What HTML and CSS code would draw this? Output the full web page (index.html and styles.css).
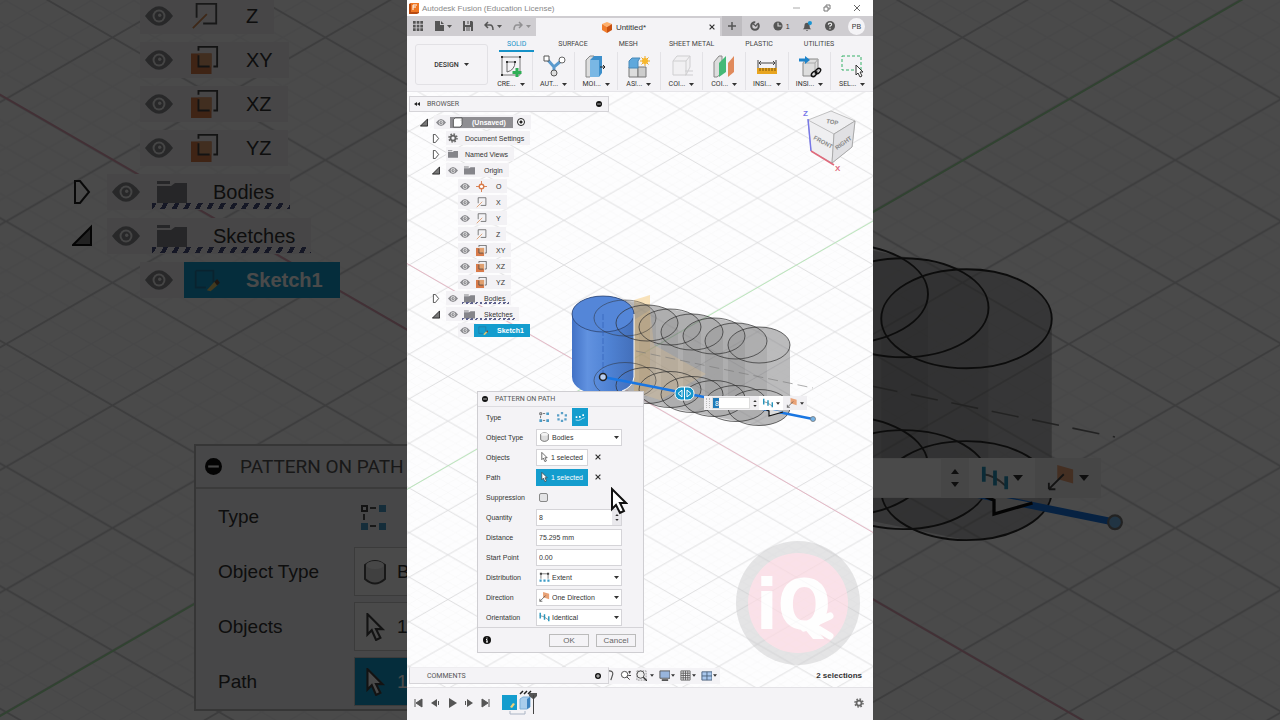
FILE: index.html
```html
<!DOCTYPE html>
<html lang="en">
<head>
    <meta charset="UTF-8">
    <meta name="viewport" content="width=device-width, initial-scale=1.0">
    <title>Autodesk Fusion (Education License)</title>
    <link rel="stylesheet" href="styles.css">
</head>
<body>
    <!-- Shared icons -->
    <svg class="sprite" aria-hidden="true">
        <symbol id="i-eye" viewBox="0 0 20 14"><path d="M0 7Q5 0 10 0T20 7Q15 14 10 14T0 7Z" fill="#8a8a8e"/><circle cx="10" cy="7" r="4.6" fill="#eee"/><circle cx="10" cy="7" r="3.2" fill="#8a8a8e"/><circle cx="10.5" cy="6.500" r="1.200" fill="#eee"/></symbol>
        <symbol id="i-closed" viewBox="0 0 18 24"><path d="M2 1h5l9 11-9 11H2Z" fill="#fff" stroke="#222" stroke-width="2"/></symbol>
        <symbol id="i-open" viewBox="0 0 20 20"><path d="M19 1v18H1Z" fill="#777" stroke="#111" stroke-width="2"/></symbol>
        <symbol id="i-folder" viewBox="0 0 30 22"><path d="M0 0h13v3H0ZM0 5h14l4-3h12v20H0Z" fill="#85858a"/></symbol>
        <symbol id="i-gear" viewBox="0 0 20 20"><circle cx="10" cy="10" r="5" fill="none" stroke="#666" stroke-width="3.500"/><circle cx="10" cy="10" r="8" fill="none" stroke="#666" stroke-width="3" stroke-dasharray="3.140 3.140"/></symbol>
        <symbol id="i-origin" viewBox="0 0 24 24"><path d="M12 0v24M0 12h24" stroke="#d87b4a" stroke-width="2"/><circle cx="12" cy="12" r="5" fill="#fff" stroke="#d87b4a" stroke-width="3"/></symbol>
        <symbol id="i-axis" viewBox="0 0 30 30"><path d="M6 17V2h21v21H13" fill="none" stroke="#555" stroke-width="2"/><path d="M2 28 17 13" stroke="#d58a55" stroke-width="2"/></symbol>
        <symbol id="i-plane" viewBox="0 0 30 30"><path d="M0 8h22v22H0Z" fill="#d87b4a"/><path d="M8 8h14v14H8Z" fill="#e0a06f"/><path d="M8 5V1h20v21h-4M8 10v12h12" fill="none" stroke="#444" stroke-width="2"/></symbol>
        <symbol id="i-sketch" viewBox="0 0 30 30"><path d="M5 5h19v13M5 5v18h11" fill="none" stroke="#2279a3" stroke-width="2"/><path d="M17 26 25 17l4 3-8 7Z" fill="#e3c76b"/><path d="m25 17 3-3 3 4-3 3Z" fill="#704c3d"/></symbol>
        <symbol id="i-comp" viewBox="0 0 24 24"><path d="M3 6 7 2h15v15l-4 5H3Z" fill="#fff" stroke="#555" stroke-width="2"/><path d="M18 7h4" stroke="#999"/></symbol>
        <symbol id="i-body" viewBox="0 0 24 26"><path d="M2 6Q12-2 22 6V20Q12 29 2 20Z" fill="#ddd" stroke="#555" stroke-width="2"/><ellipse cx="12" cy="6" rx="9" ry="4" fill="#f4f4f4"/></symbol>
        <symbol id="i-minus" viewBox="0 0 16 16"><circle cx="8" cy="8" r="8" fill="#111"/><path d="M3 8h10" stroke="#eee" stroke-width="2"/></symbol>
        <symbol id="i-plus" viewBox="0 0 16 16"><circle cx="8" cy="8" r="8" fill="#111"/><path d="M3 8h10M8 3v10" stroke="#fff" stroke-width="2"/></symbol>
        <symbol id="i-down" viewBox="0 0 10 6"><path d="M0 0h10L5 6Z" fill="currentColor"/></symbol>
        <symbol id="i-up" viewBox="0 0 10 6"><path d="M0 6h10L5 0Z" fill="currentColor"/></symbol>
        <symbol id="i-rect" viewBox="0 0 26 26"><path d="M2 2h5v5H2Z" fill="none" stroke="#444" stroke-width="2"/><path d="M10 4h6M4 10v6M10 22h6" stroke="#555" stroke-width="2"/><path d="M19 1h7v7h-7ZM1 19h7v7H1ZM19 19h7v7h-7Z" fill="#4a9cc8"/></symbol>
        <symbol id="i-circ" viewBox="0 0 26 26"><path d="M10 0h6v6h-6ZM0 6h6v6H0ZM20 6h6v6h-6ZM1 16h6v6H1ZM19 16h6v6h-6ZM10 20h6v6h-6Z" fill="#5aa0c8"/></symbol>
        <symbol id="i-path" viewBox="0 0 30 26"><path d="M2 22Q12 25 17 21T29 15" fill="none" stroke="#fff" stroke-width="2"/><path d="M2 11h5v5H2ZM12 10h5v5h-5ZM22 5h5v5h-5Z" fill="#fff"/></symbol>
        <symbol id="i-pick" viewBox="0 0 18 26"><path d="M2 1v19l4-4 4 9 4-2-4-8h6Z" fill="#fff" stroke="#444" stroke-width="2"/></symbol>
        <symbol id="i-x" viewBox="0 0 10 10"><path d="m1 1 8 8M9 1 1 9" stroke="currentColor" stroke-width="2"/></symbol>
        <symbol id="i-extent" viewBox="0 0 30 28"><path d="M5 5v14M25 5v14M5 5h20" stroke="#555" stroke-width="2"/><path d="M2 2h6v6H2ZM22 2h6v6h-6Z" fill="#444"/><path d="M1 21h6v6H1ZM12 21h6v6h-6ZM23 21h6v6h-6Z" fill="#3d9bc6"/></symbol>
        <symbol id="i-dir" viewBox="0 0 30 28"><path d="m11 0 17 5v15l-17-5Z" fill="#e9a276"/><path d="M2 26 18 10M2 26v-7M2 26h7" fill="none" stroke="#444" stroke-width="2"/></symbol>
        <symbol id="i-orient" viewBox="0 0 30 28"><path d="M2 10q12 1 24 12" fill="none" stroke="#777" stroke-width="2"/><path d="M3 2v16M15 6v16M27 12v14" stroke="#2796bd" stroke-width="4"/></symbol>
    </svg>

    <div class="stage">
        <!-- Enlarged backdrop, left -->
        <div class="side side-left" aria-hidden="true">
            <svg class="scene" viewBox="407 229 148 262" preserveAspectRatio="xMinYMid slice"><use href="#scene"/></svg>
            <ul class="tree tree-large">
                <li class="lvl2"><span class="chip"><svg class="eye"><use href="#i-eye"/></svg><svg class="ico"><use href="#i-axis"/></svg>Z</span></li>
                <li class="lvl2"><span class="chip"><svg class="eye"><use href="#i-eye"/></svg><svg class="ico"><use href="#i-plane"/></svg>XY</span></li>
                <li class="lvl2"><span class="chip"><svg class="eye"><use href="#i-eye"/></svg><svg class="ico"><use href="#i-plane"/></svg>XZ</span></li>
                <li class="lvl2"><span class="chip"><svg class="eye"><use href="#i-eye"/></svg><svg class="ico"><use href="#i-plane"/></svg>YZ</span></li>
                <li class="lvl1"><svg class="tri"><use href="#i-closed"/></svg><span class="chip hatched"><svg class="eye"><use href="#i-eye"/></svg><svg class="ico"><use href="#i-folder"/></svg>Bodies</span></li>
                <li class="lvl1"><svg class="tri"><use href="#i-open"/></svg><span class="chip hatched"><svg class="eye"><use href="#i-eye"/></svg><svg class="ico"><use href="#i-folder"/></svg>Sketches</span></li>
                <li class="lvl2"><span class="chip"><svg class="eye"><use href="#i-eye"/></svg></span><span class="picked"><svg class="ico"><use href="#i-sketch"/></svg>Sketch1</span></li>
            </ul>
            <div class="big-dialog">
                <div class="big-head"><svg class="big-dot"><use href="#i-minus"/></svg>PATTERN ON PATH</div>
                <div class="big-row"><span>Type</span><svg class="big-type"><use href="#i-rect"/></svg></div>
                <div class="big-row"><span>Object Type</span><div class="big-field"><svg><use href="#i-body"/></svg>Bodies</div></div>
                <div class="big-row"><span>Objects</span><div class="big-field"><svg><use href="#i-pick"/></svg>1 selected</div></div>
                <div class="big-row"><span>Path</span><div class="big-field active"><svg><use href="#i-pick"/></svg>1 selected</div></div>
            </div>
        </div>

        <main class="app">
            <header class="titlebar">
                <svg class="logo" viewBox="0 0 10 11"><path d="M0 1 2 0h8v10l-2 1H0Z" fill="#b84a10"/><path d="M2 0h8v9H2Z" fill="#ee7623"/><path d="M4 7V2h4M4 4h3" fill="none" stroke="#fff" stroke-width="1"/></svg>
                <span class="app-name">Autodesk Fusion (Education License)</span>
                <button aria-label="Minimize"><svg viewBox="0 0 8 8"><path d="M0 4h7" stroke="#aaa"/></svg></button>
                <button aria-label="Restore"><svg viewBox="0 0 8 8"><path d="M1 3h4v4H1ZM3 3V1h4v4H5" fill="none" stroke="#777"/></svg></button>
                <button aria-label="Close"><svg viewBox="0 0 8 8"><path d="m1 1 6 6M7 1 1 7" stroke="#666"/></svg></button>
            </header>

            <div class="tabbar">
                <div class="quick">
                    <button aria-label="Data panel"><svg class="q" viewBox="0 0 10 10"><path d="M0 0h2.700v2.700H0ZM3.700 0h2.700v2.700H3.700ZM7.300 0H10v2.700H7.300ZM0 3.700h2.700v2.700H0ZM3.700 3.700h2.700v2.700H3.700ZM7.300 3.700H10v2.700H7.300ZM0 7.300h2.700V10H0ZM3.700 7.300h2.700V10H3.700ZM7.300 7.300H10V10H7.300Z" fill="#555"/></svg></button>
                    <button class="gap-l" aria-label="File"><svg class="q" viewBox="0 0 10 10"><path d="M1 0h5v4h4v6H1ZM7 0l3 3H7Z" fill="#555"/></svg><svg class="caret"><use href="#i-down"/></svg></button>
                    <button class="gap-l" aria-label="Save"><svg class="q" viewBox="0 0 10 10"><path d="M0 0h9l1 1v9H0Z" fill="#555"/><path d="M2 0h5v4H2ZM2 6h6v4H2Z" fill="#cfcdd1"/><path d="M3 7h4M3 9h4M5 0v3" stroke="#555"/></svg></button>
                    <button class="gap-l" aria-label="Undo"><svg class="q" viewBox="0 0 10 10"><path d="M1 4h5q3 0 3 5M4 1 1 4l3 3" fill="none" stroke="#555" stroke-width="1.500"/></svg><svg class="caret"><use href="#i-down"/></svg></button>
                    <button class="gap-l faded" aria-label="Redo"><svg class="q" viewBox="0 0 10 10"><path d="M9 4H4Q1 4 1 9M6 1l3 3-3 3" fill="none" stroke="#555" stroke-width="1.500"/></svg><svg class="caret"><use href="#i-down"/></svg></button>
                </div>
                <div class="doc-tab">
                    <svg class="cube" viewBox="0 0 10 11"><path d="m5 0 5 2-5 3-5-3Z" fill="#ffb06b"/><path d="m0 2 5 3v6L0 8Z" fill="#f07c2b"/><path d="m10 2-5 3v6l5-3Z" fill="#c9500f"/></svg>
                    <span>Untitled*</span>
                    <button class="doc-close" aria-label="Close document"><svg><use href="#i-x"/></svg></button>
                </div>
                <button class="new-tab" aria-label="New design"><svg viewBox="0 0 10 10"><path d="M5 1v8M1 5h8" stroke="#555" stroke-width="1.500"/></svg></button>
                <div class="account">
                    <button aria-label="Extensions"><svg class="q" viewBox="0 0 12 12"><circle cx="6" cy="6" r="4.500" fill="none" stroke="#555" stroke-width="2.500" stroke-dasharray="21 3"/><path d="M3 3 7 6 9 3" fill="none" stroke="#555" stroke-width="1.500"/></svg></button>
                    <button aria-label="Jobs, 1"><svg class="q" viewBox="0 0 12 12"><circle cx="6" cy="6" r="5.500" fill="#555"/><path d="M6 2v4h4" fill="none" stroke="#ddd" stroke-width="1.300"/></svg>1</button>
                    <button aria-label="Notifications"><svg class="q" viewBox="0 0 12 12"><path d="M1 10q2-1 2-5 0-3 3-3t3 3q0 4 2 5ZM5 11h2v1H5Z" fill="#555"/><circle cx="9.500" cy="2.500" r="2.500" fill="#1994d2"/></svg></button>
                    <button aria-label="Help"><svg class="q" viewBox="0 0 12 12"><circle cx="6" cy="6" r="6" fill="#555"/><path d="M4 4.500q0-2 2-2t2 1.700Q8 5.500 6 6v1.500" fill="none" stroke="#eee" stroke-width="1.300"/><circle cx="6" cy="9.300" r=".8" fill="#eee"/></svg></button>
                    <button class="avatar">PB</button>
                </div>
            </div>

            <section class="ribbon">
                <button class="workspace">DESIGN <svg class="caret"><use href="#i-down"/></svg></button>
                <div class="ribbon-main">
                    <nav class="ribbon-tabs">
                        <a href="#" class="current">SOLID</a>
                        <a href="#">SURFACE</a>
                        <a href="#">MESH</a>
                        <a href="#">SHEET METAL</a>
                        <a href="#">PLASTIC</a>
                        <a href="#">UTILITIES</a>
                    </nav>
                    <div class="tools">
                        <button><svg viewBox="0 0 24 24"><path d="M3 3h18v18H3Z" fill="none" stroke="#777"/><path d="M8 18V8h8q0 8-8 10Z" fill="none" stroke="#666"/><path d="M2 2h2v2H2ZM20 2h2v2h-2ZM2 20h2v2H2ZM7 7h2v2H7ZM15 7h2v2h-2Z" fill="#333"/><path d="M18 14v9M13.500 18.500h9" stroke="#2fae55" stroke-width="3"/></svg><span>CRE...<svg class="caret"><use href="#i-down"/></svg></span></button>
                        <button><svg viewBox="0 0 24 24"><path d="m5 5 7 8 7-6M12 12v6" fill="none" stroke="#5a9ace" stroke-width="3"/><path d="M2 2h5v5H2Z" fill="#fff" stroke="#555"/><circle cx="20" cy="6" r="3" fill="#fff" stroke="#666"/><circle cx="12" cy="19" r="3" fill="#ddd" stroke="#555"/></svg><span>AUT...<svg class="caret"><use href="#i-down"/></svg></span></button>
                        <button><svg viewBox="0 0 24 24"><path d="m2 6 4-4h4v16l-4 5H2Z" fill="#ddd" stroke="#888"/><path d="M6 6h9v17H6Z" fill="#79b7e4"/><path d="m6 6 4-4h8l-3 4ZM15 6l3-4v17l-3 4Z" fill="#3d8fcb"/><path d="M16 13h5M19 11l2 2-2 2" fill="none" stroke="#222"/></svg><span>MOI...<svg class="caret"><use href="#i-down"/></svg></span></button>
                        <button><svg viewBox="0 0 24 24"><path d="M2 13h9v10H2Z" fill="#ddd" stroke="#777"/><path d="M11 13h8v10h-8Z" fill="#ccc" stroke="#777"/><path d="m2 7 3-3h8l-2 3v7H2Z" fill="#5fa8dc" stroke="#4a89b8"/><path d="M18 2v10M13 7h10M14.500 3.500l7 7M21.500 3.500l-7 7" stroke="#eba51f"/><circle cx="18" cy="7" r="3" fill="#f8b72b"/></svg><span>AS!...<svg class="caret"><use href="#i-down"/></svg></span></button>
                        <button class="pale"><svg viewBox="0 0 24 24"><path d="m3 7 4-5h13v11l-4 8H3Z" fill="#eee" stroke="#999"/><path d="M3 7h13v14M16 7l4-5M15 17h8M15 21h8" fill="none" stroke="#999"/></svg><span>COI...<svg class="caret"><use href="#i-down"/></svg></span></button>
                        <button><svg viewBox="0 0 24 24"><path d="m2 8 5-6h3v17l-5 4H2Z" fill="#ddd" stroke="#888"/><path d="m7 9 7-7v16l-7 5Z" fill="#45b977"/><path d="m16 9 6-7v16l-6 5Z" fill="#e08a5c"/></svg><span>COI...<svg class="caret"><use href="#i-down"/></svg></span></button>
                        <button><svg viewBox="0 0 24 24"><path d="M3 6v8M21 6v8M4 9h16M6 7 4 9l2 2M18 7l2 2-2 2" fill="none" stroke="#444"/><path d="M2 14h20v6H2Z" fill="#e8a520"/><path d="M5 14v3M8 14v3M11 14v3M14 14v3M17 14v3M20 14v3" stroke="#7c5409"/></svg><span>INSI...<svg class="caret"><use href="#i-down"/></svg></span></button>
                        <button><svg viewBox="0 0 24 24"><path d="m5 9 3-4h12v12l-3 5H5Z" fill="#ddd" stroke="#888"/><path d="M5 9h12v13M17 9l3-4" fill="none" stroke="#aaa"/><path d="M1 6h7" stroke="#1c83ca" stroke-width="3"/><path d="m7 2 5 4-5 4Z" fill="#1c83ca"/><ellipse cx="16" cy="20" rx="3" ry="2" transform="rotate(-45 16 20)" fill="none" stroke="#111" stroke-width="1.500"/><ellipse cx="20" cy="17" rx="3" ry="2" transform="rotate(-45 20 17)" fill="none" stroke="#111" stroke-width="1.500"/></svg><span>INSI...<svg class="caret"><use href="#i-down"/></svg></span></button>
                        <button><svg viewBox="0 0 24 24"><path d="M2 2h19v14H2Z" fill="none" stroke="#37b169" stroke-dasharray="3 2"/><path d="M16 11v10l2-2 2 4 2-1-2-4h3Z" fill="#fff" stroke="#333"/></svg><span>SEL...<svg class="caret"><use href="#i-down"/></svg></span></button>
                    </div>
                </div>
            </section>

            <section class="canvas">
                <svg class="scene" viewBox="407 92 466 595" preserveAspectRatio="xMinYMin slice">
                    <defs>
                        <!-- One cell of the isometric floor: faint fifths, stronger full lines -->
                        <pattern id="floor" x="564" y="131.200" width="77.400" height="44.600" patternUnits="userSpaceOnUse">
                            <path d="M0 8.920 15.480 0M0 17.840 30.960 0M0 26.760 46.440 0M0 35.680 61.920 0M15.480 44.600 77.400 8.920M30.960 44.600 77.400 17.840M46.440 44.600 77.400 26.760M61.920 44.600 77.400 35.680M61.920 0 77.400 8.920M46.440 0 77.400 17.840M30.960 0 77.400 26.760M15.480 0 77.400 35.680M0 8.920 61.920 44.600M0 17.840 46.440 44.600M0 26.760 30.960 44.600M0 35.680 15.480 44.600" stroke="#f5f5f6" stroke-width=".5"/>
                            <path d="M0 0 77.400 44.600M0 44.600 77.400 0" stroke="#d0d0d2" stroke-width=".7"/>
                        </pattern>
                        <linearGradient id="steel"><stop offset="0" stop-color="#4272c6"/><stop offset=".25" stop-color="#6192e0"/><stop offset=".6" stop-color="#4f82d3"/><stop offset="1" stop-color="#436fba"/></linearGradient>
                        <path id="solid" d="M-31 0V62.500A31 18 0 0 0 31 62.500V0A31 18 0 0 0-31 0Z" fill="#5c5b5f" fill-opacity=".13"/>
                        <g id="rims" fill="none" stroke="#2c2c2c" stroke-width=".7"><ellipse rx="31" ry="18"/><ellipse cy="62.500" rx="31" ry="18"/></g>
                    </defs>
                    <g id="scene">
                        <path d="M400 80H880V700H400Z" fill="#fdfdfe"/>
                        <path d="M400 80H880V700H400Z" fill="url(#floor)"/>
                        <path d="M400 259.500 880 536.500" stroke="#e4a5b8" stroke-width=".7"/>
                        <path d="M400 493.500 603 376.500 880 217" fill="none" stroke="#a8e6a8" stroke-width=".7"/>
                        <path d="M634 300 650 295V388L634 400Z" fill="#f5c46a" fill-opacity=".45"/>
                        <path d="M625 300 759 327A31 18 0 0 1 790 345V407.500A31 18 0 0 1 759 425.500L625 398.500Z" fill="#6f6e72" fill-opacity=".36"/>
                        <use href="#solid" x="625" y="318"/>
                        <use href="#solid" x="647" y="323"/>
                        <use href="#solid" x="670" y="327"/>
                        <use href="#solid" x="692" y="332"/>
                        <use href="#solid" x="714" y="336"/>
                        <use href="#solid" x="736" y="341"/>
                        <use href="#solid" x="759" y="345"/>
                        <path d="M634 320 650 310 654 345 706 374 660 400 634 392Z" fill="#e8c48c" fill-opacity=".3"/>
                        <path d="M572 314V377A31 18 0 0 0 634 377V314A31 18 0 0 0 572 314Z" fill="url(#steel)"/>
                        <ellipse cx="603" cy="314" rx="31" ry="18" fill="#5486d8" stroke="#263a60" stroke-width=".7"/>
                        <path d="M603 314v63" stroke="#3564bd" stroke-width=".8" stroke-dasharray="6 2"/>
                        <path d="M634 314V377Q633 387 622 391" fill="none" stroke="#fff"/>
                        <use href="#rims" x="625" y="318" opacity=".7"/>
                        <use href="#rims" x="647" y="323"/>
                        <use href="#rims" x="670" y="327"/>
                        <use href="#rims" x="692" y="332"/>
                        <use href="#rims" x="714" y="336"/>
                        <use href="#rims" x="736" y="341"/>
                        <use href="#rims" x="759" y="345"/>
                        <path d="M636 351 813 388" stroke="#777" stroke-width=".6" stroke-dasharray="10 5"/>
                        <path d="M603 377Q650 386 704 397T813 419" fill="none" stroke="#1976e2" stroke-width="2.600"/>
                        <circle cx="603" cy="377" r="3.500" fill="#b7cdef" stroke="#222" stroke-width="1.500"/>
                        <circle cx="813" cy="419" r="2.500" fill="#74b3e8" stroke="#777" stroke-width=".8"/>
                        <path d="M762 408l7 3v5l14-4" fill="#ddd" stroke="#111" stroke-width="1.200"/>
                    </g>
                    <rect x="675" y="387" width="19" height="13" rx="6" fill="#1396cb" stroke="#fff"/>
                    <path d="M684.500 387v13" stroke="#fff"/>
                    <path d="m682 390-4 3.500 4 3.500ZM687 390l4 3.500-4 3.500Z" fill="#1396cb" stroke="#fff"/>
                    <!-- View cube -->
                    <path d="M831 111 855 121 852 147 832 163 811 151 808 120Z" fill="#efeff1" stroke="#aaa" stroke-width=".7"/>
                    <path d="M808 120 834 134 855 121M834 134 832 163" fill="none" stroke="#aaa" stroke-width=".7"/>
                    <path d="m834 134 21-13-3 26-20 16Z" fill="#e0e0e3" stroke="#999" stroke-width=".7"/>
                    <path d="M808 119 811 151" stroke="#7777e8" stroke-width="1.500"/>
                    <path d="m811 151 23 14" stroke="#e06a7c" stroke-width="1.500"/>
                    <g class="cube-text">
                        <text x="813" y="139" transform="rotate(28 813 139)">FRONT</text>
                        <text x="837" y="150" transform="rotate(-36 837 150)">RIGHT</text>
                        <text x="826" y="123" transform="rotate(10 826 123)">TOP</text>
                    </g>
                    <text class="axis-z" x="803" y="116">Z</text>
                    <text class="axis-x" x="835" y="171">X</text>
                </svg>

                <!-- Channel mark -->
                <svg class="watermark" viewBox="0 0 124 124">
                    <circle cx="62" cy="62" r="62" fill="#c9c9cb" fill-opacity=".6"/>
                    <circle cx="62" cy="62" r="50" fill="#ffdbe4" fill-opacity=".85"/>
                    <text x="20" y="88">iQ</text>
                    <path d="m68 87 26-12M74 83l20 12" stroke="#fff" stroke-width="7" stroke-linecap="round"/>
                </svg>

                <div class="panel-head">
                    <svg class="rewind" viewBox="0 0 12 8"><path d="M6 0v8L0 4ZM12 0v8L6 4Z" fill="#222"/></svg>
                    <span>BROWSER</span>
                    <button aria-label="Collapse browser"><svg><use href="#i-minus"/></svg></button>
                </div>
                <ul class="tree">
                    <li class="lvl0"><svg class="tri"><use href="#i-open"/></svg><span class="chip root"><svg class="eye"><use href="#i-eye"/></svg><b class="unsaved"><svg class="ico"><use href="#i-comp"/></svg>(Unsaved)</b><input type="radio" checked aria-label="Activate component"></span></li>
                    <li class="lvl1"><svg class="tri"><use href="#i-closed"/></svg><span class="chip no-eye"><svg class="ico"><use href="#i-gear"/></svg>Document Settings</span></li>
                    <li class="lvl1"><svg class="tri"><use href="#i-closed"/></svg><span class="chip no-eye"><svg class="ico"><use href="#i-folder"/></svg>Named Views</span></li>
                    <li class="lvl1"><svg class="tri"><use href="#i-open"/></svg><span class="chip"><svg class="eye"><use href="#i-eye"/></svg><svg class="ico"><use href="#i-folder"/></svg>Origin</span></li>
                    <li class="lvl2"><span class="chip"><svg class="eye"><use href="#i-eye"/></svg><svg class="ico"><use href="#i-origin"/></svg>O</span></li>
                    <li class="lvl2"><span class="chip"><svg class="eye"><use href="#i-eye"/></svg><svg class="ico"><use href="#i-axis"/></svg>X</span></li>
                    <li class="lvl2"><span class="chip"><svg class="eye"><use href="#i-eye"/></svg><svg class="ico"><use href="#i-axis"/></svg>Y</span></li>
                    <li class="lvl2"><span class="chip"><svg class="eye"><use href="#i-eye"/></svg><svg class="ico"><use href="#i-axis"/></svg>Z</span></li>
                    <li class="lvl2"><span class="chip"><svg class="eye"><use href="#i-eye"/></svg><svg class="ico"><use href="#i-plane"/></svg>XY</span></li>
                    <li class="lvl2"><span class="chip"><svg class="eye"><use href="#i-eye"/></svg><svg class="ico"><use href="#i-plane"/></svg>XZ</span></li>
                    <li class="lvl2"><span class="chip"><svg class="eye"><use href="#i-eye"/></svg><svg class="ico"><use href="#i-plane"/></svg>YZ</span></li>
                    <li class="lvl1"><svg class="tri"><use href="#i-closed"/></svg><span class="chip hatched"><svg class="eye"><use href="#i-eye"/></svg><svg class="ico"><use href="#i-folder"/></svg>Bodies</span></li>
                    <li class="lvl1"><svg class="tri"><use href="#i-open"/></svg><span class="chip hatched"><svg class="eye"><use href="#i-eye"/></svg><svg class="ico"><use href="#i-folder"/></svg>Sketches</span></li>
                    <li class="lvl2"><span class="chip"><svg class="eye"><use href="#i-eye"/></svg></span><span class="picked"><svg class="ico"><use href="#i-sketch"/></svg>Sketch1</span></li>
                </ul>

                <!-- Value box on the path -->
                <div class="mini">
                    <span class="grip"></span>
                    <input type="text" value="8" aria-label="Pattern quantity">
                    <span class="spin"><svg><use href="#i-up"/></svg><svg><use href="#i-down"/></svg></span>
                    <button class="orient" aria-label="Orientation"><svg><use href="#i-orient"/></svg><svg class="caret"><use href="#i-down"/></svg></button>
                    <button aria-label="Direction"><svg><use href="#i-dir"/></svg><svg class="caret"><use href="#i-down"/></svg></button>
                </div>

                <form class="dialog">
                    <h2><svg><use href="#i-minus"/></svg>PATTERN ON PATH</h2>
                    <div class="fields">
                        <div class="row">
                            <span>Type</span>
                            <div class="types">
                                <button type="button" aria-label="Rectangular"><svg><use href="#i-rect"/></svg></button>
                                <button type="button" aria-label="Circular"><svg><use href="#i-circ"/></svg></button>
                                <button type="button" class="active" aria-label="On path"><svg><use href="#i-path"/></svg></button>
                            </div>
                        </div>
                        <div class="row">
                            <label for="objectType">Object Type</label>
                            <div class="field"><svg><use href="#i-body"/></svg><select id="objectType"><option>Bodies</option></select><svg class="caret"><use href="#i-down"/></svg></div>
                        </div>
                        <div class="row">
                            <span>Objects</span>
                            <button type="button" class="selection"><svg><use href="#i-pick"/></svg>1 selected</button>
                            <button type="button" class="clear" aria-label="Clear objects"><svg><use href="#i-x"/></svg></button>
                        </div>
                        <div class="row">
                            <span>Path</span>
                            <button type="button" class="selection active"><svg><use href="#i-pick"/></svg>1 selected</button>
                            <button type="button" class="clear" aria-label="Clear path"><svg><use href="#i-x"/></svg></button>
                        </div>
                        <div class="row">
                            <label for="suppression">Suppression</label>
                            <input type="checkbox" id="suppression">
                        </div>
                        <div class="row">
                            <label for="quantity">Quantity</label>
                            <div class="field"><input type="text" id="quantity" value="8"><span class="spin"><svg><use href="#i-up"/></svg><svg><use href="#i-down"/></svg></span></div>
                        </div>
                        <div class="row">
                            <label for="distance">Distance</label>
                            <div class="field"><input type="text" id="distance" value="75.295 mm"></div>
                        </div>
                        <div class="row">
                            <label for="start">Start Point</label>
                            <div class="field"><input type="text" id="start" value="0.00"></div>
                        </div>
                        <div class="row">
                            <label for="distribution">Distribution</label>
                            <div class="field"><svg><use href="#i-extent"/></svg><select id="distribution"><option>Extent</option></select><svg class="caret"><use href="#i-down"/></svg></div>
                        </div>
                        <div class="row">
                            <label for="direction">Direction</label>
                            <div class="field"><svg><use href="#i-dir"/></svg><select id="direction"><option>One Direction</option></select><svg class="caret"><use href="#i-down"/></svg></div>
                        </div>
                        <div class="row">
                            <label for="orientation">Orientation</label>
                            <div class="field"><svg><use href="#i-orient"/></svg><select id="orientation"><option>Identical</option></select><svg class="caret"><use href="#i-down"/></svg></div>
                        </div>
                    </div>
                    <footer>
                        <svg class="info" viewBox="0 0 16 16"><circle cx="8" cy="8" r="8" fill="#111"/><path d="M8 3v2M6 7h2v5M6 12h4" fill="none" stroke="#fff" stroke-width="2"/></svg>
                        <button type="button">OK</button>
                        <button type="button">Cancel</button>
                    </footer>
                </form>

                <svg class="pointer" viewBox="0 0 18 28"><path d="M2 2v20l4-4 4 8 4-2-4-8h6Z" fill="#fff" stroke="#111" stroke-width="2"/></svg>

                <div class="status">
                    <div class="comments">
                        <span>COMMENTS</span>
                        <button aria-label="Add comment"><svg><use href="#i-plus"/></svg></button>
                    </div>
                    <div class="nav">
                        <button class="cut" aria-label="Pan"><svg viewBox="0 0 12 12"><path d="M0 1q5 0 4 4l-2 6" fill="none" stroke="#555" stroke-width="1.300"/></svg></button>
                        <button aria-label="Zoom"><svg viewBox="0 0 12 12"><circle cx="5" cy="5" r="3.500" fill="#fff" stroke="#444"/><path d="m7.500 7.500 3 3M9 2h3M10.500 1v3M9 6h3" stroke="#333"/></svg></button>
                        <button class="fit" aria-label="Fit"><svg viewBox="0 0 12 12"><path d="M1 1h10v10H1Z" fill="none" stroke="#777" stroke-width=".8" stroke-dasharray="2 1"/><circle cx="5" cy="5" r="4" fill="#eee" stroke="#444"/><path d="m8 8 4 4" stroke="#333" stroke-width="1.500"/></svg><svg class="caret"><use href="#i-down"/></svg></button>
                        <button aria-label="Display settings"><svg viewBox="0 0 12 12"><path d="M1 1h11v8H1Z" fill="#98b5dc" stroke="#555"/><path d="M3 11h7" stroke="#555" stroke-width="2"/></svg><svg class="caret"><use href="#i-down"/></svg></button>
                        <button aria-label="Grid settings"><svg viewBox="0 0 12 12"><path d="M1 1h10v10H1ZM3.500 1v10M6 1v10M8.500 1v10M1 3.500h10M1 6h10M1 8.500h10" fill="none" stroke="#555" stroke-width=".9"/></svg><svg class="caret"><use href="#i-down"/></svg></button>
                        <button aria-label="Viewports"><svg viewBox="0 0 12 12"><path d="M1 2h11v9H1ZM6.500 2v9M1 6.500h11" fill="#a9c7ec" stroke="#4c627e"/></svg><svg class="caret"><use href="#i-down"/></svg></button>
                    </div>
                    <strong>2 selections</strong>
                </div>
            </section>

            <footer class="timeline">
                <button aria-label="First"><svg viewBox="0 0 10 10"><path d="M2 1v8M9 1v8L3 5Z" fill="#555" stroke="#555"/></svg></button>
                <button aria-label="Step back"><svg viewBox="0 0 10 10"><path d="M7 1v8L1 5ZM8 3h1v4H8Z" fill="#555"/></svg></button>
                <button aria-label="Play"><svg viewBox="0 0 10 10"><path d="m2 0 8 5-8 5Z" fill="#555"/></svg></button>
                <button aria-label="Step forward"><svg viewBox="0 0 10 10"><path d="M3 1v8l6-4ZM1 3h1v4H1Z" fill="#555"/></svg></button>
                <button aria-label="Last"><svg viewBox="0 0 10 10"><path d="M8 1v8M1 1v8l6-4Z" fill="#555" stroke="#555"/></svg></button>
                <svg class="features" viewBox="0 0 38 28">
                    <path d="M0 6h15v15H0Z" fill="#149dce"/>
                    <path d="m8 18 3-4 2 1-3 4Z" fill="#f0d278"/>
                    <path d="m18 10 3-2h7v10l-3 2h-7Z" fill="#a9cdec" stroke="#7fb0d8"/>
                    <path d="M25 10v10l3-2V8Z" fill="#3c83c0"/>
                    <path d="m18 5 3-3M22 5l3-3M26 5l3-3" stroke="#222" stroke-width="1.500"/>
                    <path d="M27 4h8v3l-3 3-1 0-4-3Z" fill="#555"/>
                    <path d="M31.500 6v19" stroke="#444"/>
                    <path d="M8 22v3h15v-3" fill="none" stroke="#aab4c4"/>
                </svg>
                <button class="prefs" aria-label="Preferences"><svg><use href="#i-gear"/></svg></button>
            </footer>
        </main>

        <!-- Enlarged backdrop, right -->
        <div class="side side-right" aria-hidden="true">
            <svg class="scene" viewBox="725 229 148 262" preserveAspectRatio="xMinYMid slice"><use href="#scene"/></svg>
            <div class="big-mini">
                <span class="big-value"></span>
                <span class="spin"><svg><use href="#i-up"/></svg><svg><use href="#i-down"/></svg></span>
                <span class="big-tool white"><svg><use href="#i-orient"/></svg><svg class="caret"><use href="#i-down"/></svg></span>
                <span class="big-tool"><svg><use href="#i-dir"/></svg><svg class="caret"><use href="#i-down"/></svg></span>
            </div>
        </div>
    </div>
</body>
</html>
```
FILE: styles.css
```css
/* Base */
* {
    box-sizing: border-box;
}

body {
    margin: 0;
    font-family: "Liberation Sans", Arial, sans-serif;
    font-size: 7px;
    color: #333;
    background-color: #4a4a4b;
}

button, input, select {
    margin: 0;
    padding: 0;
    border: none;
    background: none;
    font: inherit;
    color: inherit;
}

button {
    display: flex;
    align-items: center;
    justify-content: center;
    cursor: pointer;
}

svg {
    display: block;
    flex: none;
}

.sprite {
    position: absolute;
    width: 0;
    height: 0;
}

.caret {
    width: 5px;
    height: 3px;
}

.stage {
    display: grid;
    grid-template-columns: 407fr 466fr 407fr;
    height: 100vh;
    overflow: hidden;
}

.scene {
    position: absolute;
    inset: 0;
    width: 100%;
    height: 100%;
}

/* Dark backdrops */
.side {
    position: relative;
    overflow: hidden;
    min-width: 0;
}

.side::after {
    content: "";
    position: absolute;
    inset: 0;
    background-color: rgba(0, 0, 0, 0.71);
}

/* Main window */
.app {
    display: flex;
    flex-direction: column;
    min-width: 0;
    background-color: #f4f3f6;
}

.titlebar {
    display: flex;
    align-items: center;
    height: 16px;
    padding: 0 12px 0 2px;
    background-color: #fff;
}

.logo {
    width: 10px;
    height: 11px;
    margin-right: 3px;
}

.app-name {
    flex: 1;
    font-size: 8px;
    color: #888;
}

.titlebar button {
    margin-left: 22px;
}

.titlebar button svg {
    width: 8px;
    height: 8px;
}

.tabbar {
    display: flex;
    height: 20px;
    background-color: #cfcdd1;
}

.quick {
    display: flex;
    width: 129px;
    padding-left: 6px;
}

.quick button {
    gap: 3px;
    color: #555;
}

.q {
    width: 10px;
    height: 10px;
}

.gap-l {
    margin-left: 11px;
}

.faded {
    opacity: 0.5;
}

.doc-tab {
    flex: 1;
    display: flex;
    align-items: center;
    justify-content: center;
    gap: 4px;
    position: relative;
    margin-top: 2px;
    padding-right: 8px;
    font-size: 8px;
    background-color: #f4f3f6;
}

.cube {
    width: 10px;
    height: 11px;
}

.doc-close {
    position: absolute;
    right: 5px;
}

.doc-close svg {
    width: 6px;
    height: 6px;
}

.new-tab {
    width: 20px;
    margin-left: 2px;
    background-color: #bebcc0;
}

.new-tab svg {
    width: 10px;
    height: 10px;
}

.account {
    display: flex;
    align-items: center;
    justify-content: space-between;
    width: 131px;
    padding: 0 8px;
}

.account button {
    gap: 3px;
}

.avatar {
    width: 17px;
    height: 17px;
    border-radius: 50%;
    background-color: #f4f3f6;
}

/* Ribbon */
.ribbon {
    display: flex;
    height: 56px;
    font-family: Roboto, Arial, sans-serif;
    background-color: #f4f3f6;
    border-bottom: 1px solid #e6e5e9;
}

.workspace {
    width: 73px;
    height: 41px;
    margin: 8px 2px 0 8px;
    gap: 5px;
    border: 1px solid #e2e1e5;
    border-radius: 3px;
    font-weight: 500;
}

.ribbon-main {
    flex: 1;
    min-width: 0;
}

.ribbon-tabs {
    display: flex;
    gap: 31px;
    padding-left: 9px;
    height: 16px;
}

.ribbon-tabs a {
    color: #444;
    line-height: 16px;
    text-decoration: none;
    white-space: nowrap;
}

.ribbon-tabs .current {
    padding: 0 8px;
    margin-right: -7px;
    color: #1692c8;
    border-bottom: 2px solid #1692c8;
}

.tools {
    display: flex;
}

.tools button {
    flex: 1;
    flex-direction: column;
    gap: 2px;
    height: 38px;
    border-left: 1px solid #e3e2e6;
}

.tools button:first-child {
    border-left: none;
}

.tools button > svg {
    width: 24px;
    height: 24px;
}

.tools span {
    display: flex;
    align-items: center;
    gap: 4px;
}

.pale > svg {
    opacity: 0.4;
}

/* Canvas */
.canvas {
    flex: 1;
    display: flex;
    flex-direction: column;
    align-items: flex-start;
    position: relative;
    min-height: 0;
    overflow: hidden;
}

.cube-text {
    font-size: 6px;
    font-weight: bold;
    fill: #888;
}

.axis-z, .axis-x {
    font-size: 8px;
    font-weight: bold;
    fill: #7777e8;
}

.axis-x {
    fill: #e06a7c;
}

.watermark {
    position: absolute;
    right: 13px;
    bottom: 22px;
    width: 124px;
    height: 124px;
    opacity: 0.8;
}

.watermark text {
    font-family: "DejaVu Sans Condensed", "DejaVu Sans", sans-serif;
    font-size: 70px;
    font-weight: bold;
    fill: #fff;
}

/* Browser tree */
.panel-head {
    display: flex;
    align-items: center;
    position: relative;
    width: 200px;
    height: 16px;
    margin: 4px 0 2px 2px;
    padding: 0 6px 0 4px;
    font-family: Roboto, Arial, sans-serif;
    color: #555;
    background-color: #f4f3f6;
    border: 1px solid #d5d4d8;
}

.panel-head span {
    flex: 1;
    margin-left: 7px;
}

.rewind {
    width: 6px;
    height: 4px;
}

.panel-head button svg, .comments button svg, .dialog h2 svg {
    width: 6px;
    height: 6px;
}

.tree {
    position: relative;
    list-style: none;
    margin: 0;
    padding: 0;
}

.tree li {
    display: flex;
    align-items: center;
    height: 16px;
    white-space: nowrap;
}

.lvl0 {
    padding-left: 13px;
}

.lvl1 {
    padding-left: 25px;
}

.lvl2 {
    padding-left: 51px;
}

.tri {
    width: 8px;
    height: 9px;
    margin-right: 6px;
}

.chip {
    display: flex;
    align-items: center;
    height: 14px;
    padding: 0 6px 0 2px;
    background-color: #f3f2f5;
}

.eye {
    width: 10px;
    height: 7px;
    margin-right: 6px;
}

.ico {
    width: 11px;
    height: 11px;
    margin-right: 9px;
}

.no-eye .ico {
    width: 10px;
    height: 10px;
    margin-right: 7px;
}

.unsaved {
    display: flex;
    align-items: center;
    height: 11px;
    padding: 0 7px 0 2px;
    margin-left: -2px;
    color: #fff;
    background-color: #8f8e92;
}

.root input {
    appearance: none;
    width: 8px;
    height: 8px;
    margin-left: 4px;
    border: 1px solid #222;
    border-radius: 50%;
    background: radial-gradient(#222 0 1px, #fff 2px);
}

.hatched {
    position: relative;
}

.hatched::after {
    content: "";
    position: absolute;
    left: 16px;
    right: 2px;
    bottom: 1px;
    height: 2px;
    background: repeating-linear-gradient(120deg, #5d628e 0 2px, transparent 2px 4px);
}

.picked {
    display: flex;
    align-items: center;
    height: 13px;
    padding: 0 6px 0 3px;
    margin-left: -2px;
    font-weight: bold;
    color: #fff;
    background-color: #149dce;
}

.lvl2 .chip:has(+ .picked) {
    padding-right: 0;
}

/* Tree on the backdrop */
.tree-large {
    margin-top: -6px;
    font-size: 20px;
}

.tree-large li {
    height: 44px;
}

.tree-large .lvl1 {
    padding-left: 72px;
}

.tree-large .lvl2 {
    padding-left: 140px;
}

.tree-large .tri {
    width: 20px;
    height: 24px;
    margin-right: 15px;
}

.tree-large .chip {
    height: 36px;
    padding: 0 16px 0 5px;
}

.tree-large .eye {
    width: 28px;
    height: 20px;
    margin-right: 17px;
}

.tree-large .ico {
    width: 30px;
    height: 28px;
    margin-right: 26px;
}

.tree-large .hatched::after {
    left: 45px;
    right: 0;
    height: 6px;
    background: repeating-linear-gradient(120deg, #4b5080 0 4px, transparent 4px 10px);
}

.tree-large .picked {
    height: 36px;
    padding: 0 17px 0 6px;
    margin-left: -6px;
}

/* Dialog on the backdrop */
.big-dialog {
    position: absolute;
    left: 194px;
    top: 444px;
    width: 456px;
    font-size: 19px;
    background-color: #f4f3f6;
    border: 2px solid #bbb;
}

.big-head {
    display: flex;
    align-items: center;
    gap: 18px;
    height: 43px;
    padding-left: 9px;
    font-size: 19px;
    font-family: Roboto, Arial, sans-serif;
    color: #555;
    white-space: nowrap;
    border-bottom: 2px solid #ccc;
}

.big-dot {
    width: 17px;
    height: 17px;
}

.big-row {
    display: flex;
    align-items: center;
    height: 55px;
    padding-left: 22px;
}

.big-row > span {
    width: 136px;
}

.big-type {
    width: 26px;
    height: 26px;
    margin-left: 6px;
}

.big-field {
    display: flex;
    align-items: center;
    gap: 10px;
    width: 240px;
    height: 49px;
    padding-left: 8px;
    background-color: #fff;
    border: 1px solid #ccc;
}

.big-field svg {
    width: 24px;
    height: 28px;
}

.big-field.active {
    color: #fff;
    background-color: #149dce;
}

.big-mini {
    display: flex;
    align-items: center;
    position: absolute;
    left: 0;
    top: 458px;
    height: 40px;
    background-color: #f0eff2;
}

.big-value {
    width: 68px;
    height: 38px;
    background-color: #fff;
}

.big-mini .spin {
    width: 28px;
    gap: 8px;
}

.big-mini .spin svg {
    width: 8px;
    height: 5px;
}

.big-tool {
    display: flex;
    align-items: center;
    gap: 4px;
    height: 40px;
    padding: 0 12px;
}

.big-tool svg {
    width: 28px;
    height: 28px;
}

.big-tool .caret {
    width: 10px;
    height: 6px;
}

.white {
    background-color: #fff;
}

/* Value box */
.mini {
    display: flex;
    align-items: center;
    position: absolute;
    left: 297px;
    top: 304px;
    height: 14px;
    background-color: #f0eff2;
}

.grip {
    width: 4px;
    height: 10px;
    margin: 0 2px;
    border-left: 1px dotted #bbb;
    border-right: 1px dotted #bbb;
}

.mini input {
    width: 38px;
    height: 12px;
    padding-left: 2px;
    border: 1px solid #ddd;
    color: #fff;
    background: linear-gradient(90deg, #2179b8 6px, #fff 6px);
}

.spin {
    display: flex;
    flex-direction: column;
    align-items: center;
    justify-content: center;
    gap: 3px;
    width: 9px;
}

.spin svg {
    width: 4px;
    height: 2px;
}

.mini button {
    gap: 2px;
    height: 14px;
    padding: 0 3px;
}

.mini button svg {
    width: 12px;
    height: 10px;
}

.mini button .caret {
    width: 4px;
    height: 3px;
}

.mini .orient {
    background-color: #fff;
}

/* Pattern dialog */
.dialog {
    position: absolute;
    left: 70px;
    top: 299px;
    width: 167px;
    background-color: #f4f3f6;
    border: 1px solid #cfced2;
}

.dialog h2 {
    display: flex;
    align-items: center;
    gap: 7px;
    height: 15px;
    margin: 0;
    padding-left: 4px;
    font-family: Roboto, Arial, sans-serif;
    font-size: 7px;
    font-weight: normal;
    color: #555;
    border-bottom: 1px solid #dddce0;
}

.fields {
    padding: 0 21px 0 8px;
}

.row {
    display: grid;
    grid-template-columns: 50px auto 1fr;
    align-items: center;
    height: 20px;
}

.types {
    display: flex;
    gap: 2px;
}

.types button {
    width: 16px;
    height: 18px;
}

.types svg {
    width: 10px;
    height: 10px;
}

.active {
    color: #fff;
    background-color: #149dce;
}

.field {
    display: flex;
    align-items: center;
    grid-column: 2 / 4;
    height: 17px;
    padding-left: 2px;
    background-color: #fff;
    border: 1px solid #d5d4d8;
}

.field > svg {
    width: 11px;
    height: 10px;
    margin-right: 2px;
}

.field > .caret {
    width: 5px;
    height: 3px;
}

.field select {
    flex: 1;
    min-width: 0;
    appearance: none;
}

.field input {
    flex: 1;
    min-width: 0;
}

.field .spin {
    height: 15px;
    background-color: #e9e8ec;
}

.selection {
    width: 52px;
    height: 17px;
    gap: 3px;
    border: 1px solid #d5d4d8;
}

.selection:not(.active) {
    background-color: #fff;
}

.selection.active {
    border-color: #149dce;
}

.selection svg {
    width: 7px;
    height: 10px;
}

.clear {
    width: 20px;
}

.clear svg {
    width: 6px;
    height: 6px;
}

.row input[type="checkbox"] {
    appearance: none;
    width: 9px;
    height: 9px;
    margin-left: 3px;
    border: 1px solid #888;
    border-radius: 2px;
    background-color: #e3e3e5;
}

.dialog footer {
    display: flex;
    align-items: center;
    gap: 7px;
    height: 25px;
    padding: 0 7px 0 5px;
    border-top: 1px solid #d5d4d8;
}

.dialog footer button {
    width: 40px;
    height: 13px;
    font-size: 8px;
    color: #666;
    border: 1px solid #bbb;
}

.info {
    width: 8px;
    height: 8px;
    margin-right: auto;
}

.pointer {
    position: absolute;
    left: 203px;
    top: 395px;
    width: 18px;
    height: 28px;
}

/* Status row */
.status {
    display: flex;
    align-items: center;
    position: relative;
    align-self: stretch;
    margin-top: auto;
    margin-bottom: 3px;
    padding: 0 11px 0 2px;
}

.comments {
    display: flex;
    align-items: center;
    justify-content: space-between;
    width: 200px;
    height: 17px;
    padding: 0 7px 0 17px;
    font-family: Roboto, Arial, sans-serif;
    color: #555;
    background-color: #f4f3f6;
    border: 1px solid #d5d4d8;
    border-top-color: #eeedf0;
}

.nav {
    display: flex;
    gap: 5px;
    height: 16px;
    padding-right: 3px;
    background-color: #f4f3f6;
}

.nav button {
    gap: 1px;
}

.nav svg {
    width: 11px;
    height: 11px;
}

.nav .caret {
    width: 4px;
    height: 3px;
}

.nav .cut {
    width: 6px;
    overflow: hidden;
    justify-content: flex-start;
}

.nav .fit {
    gap: 3px;
}

.status strong {
    margin-left: auto;
    font-size: 8px;
}

/* Timeline */
.timeline {
    display: flex;
    align-items: center;
    gap: 7px;
    height: 33px;
    padding: 0 9px 2px 6px;
    background-color: #f4f3f6;
    border-top: 1px solid #e3e2e6;
}

.timeline button svg {
    width: 10px;
    height: 10px;
}

.features {
    width: 38px;
    height: 28px;
    margin-left: 4px;
}

.prefs {
    margin-left: auto;
}
```
